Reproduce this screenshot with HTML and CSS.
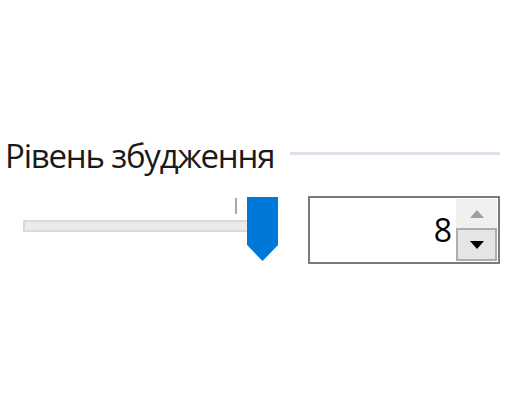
FILE: index.html
```html
<!DOCTYPE html>
<html lang="uk">
<head>
  <meta charset="UTF-8">
  <title>Рівень збудження</title>
  <link rel="stylesheet" href="styles.css">
</head>
<body>
  <div class="group">
    <div class="group-header">
      <span class="group-title">Рівень збудження</span>
      <span class="group-line"></span>
    </div>
    <div class="group-body">
      <div class="slider">
        <span class="slider-tick"></span>
        <div class="slider-track"></div>
        <svg class="slider-thumb" width="31" height="64" viewBox="0 0 31 64">
          <path d="M0 0 H31 V48 L15.5 64 L0 48 Z" fill="#0078d7"/>
        </svg>
      </div>
      <div class="spin">
        <div class="spin-value">8</div>
        <div class="spin-buttons">
          <div class="spin-btn spin-up">
            <svg width="14" height="8" viewBox="0 0 14 8"><path d="M7 0 L14 8 H0 Z" fill="#a0a0a0"/></svg>
          </div>
          <div class="spin-btn spin-down">
            <svg width="14" height="8" viewBox="0 0 14 8"><path d="M0 0 H14 L7 8 Z" fill="#000"/></svg>
          </div>
        </div>
      </div>
    </div>
  </div>
</body>
</html>
```

FILE: styles.css
```css
body {
  margin: 0;
  background: #fff;
  font-family: "Open Sans", "Noto Sans", sans-serif;
  width: 512px;
  height: 400px;
}

.group {
  padding: 135px 12px 0 5px;
}

.group-header {
  display: flex;
  align-items: center;
}

.group-title {
  font-size: 33px;
  line-height: 42px;
  color: #1a1a1a;
  letter-spacing: -1.2px;
}

.group-line {
  flex: 1;
  height: 3px;
  margin-left: 16px;
  margin-top: -6px;
  background: #dde3ea;
}

.group-body {
  display: flex;
  align-items: flex-start;
  margin-top: 19px;
}

.slider {
  position: relative;
  width: 273px;
  height: 66px;
  margin-left: 18px;
}

.slider-track {
  position: absolute;
  left: 0;
  top: 24px;
  width: 224px;
  height: 8px;
  border: 2px solid #dadada;
  background: #ebebeb;
}

.slider-tick {
  position: absolute;
  left: 212px;
  top: 2px;
  width: 2px;
  height: 16px;
  background: #a8a8a8;
}

.slider-thumb {
  position: absolute;
  left: 224px;
  top: 1px;
}

.spin {
  display: flex;
  width: 188px;
  height: 64px;
  margin-left: 12px;
  border: 2px solid #7a7a7a;
  background: #fff;
}

.spin-value {
  flex: 1;
  text-align: right;
  font-size: 32px;
  line-height: 64px;
  padding-right: 4px;
  color: #000;
}

.spin-buttons {
  display: flex;
  flex-direction: column;
  width: 41px;
  padding: 1px 1px 1px 0;
}

.spin-btn {
  flex: 1;
  display: flex;
  align-items: center;
  justify-content: center;
  background: #f0f0f0;
}

.spin-down {
  border: 2px solid #adadad;
  background: #e5e5e5;
}
```
